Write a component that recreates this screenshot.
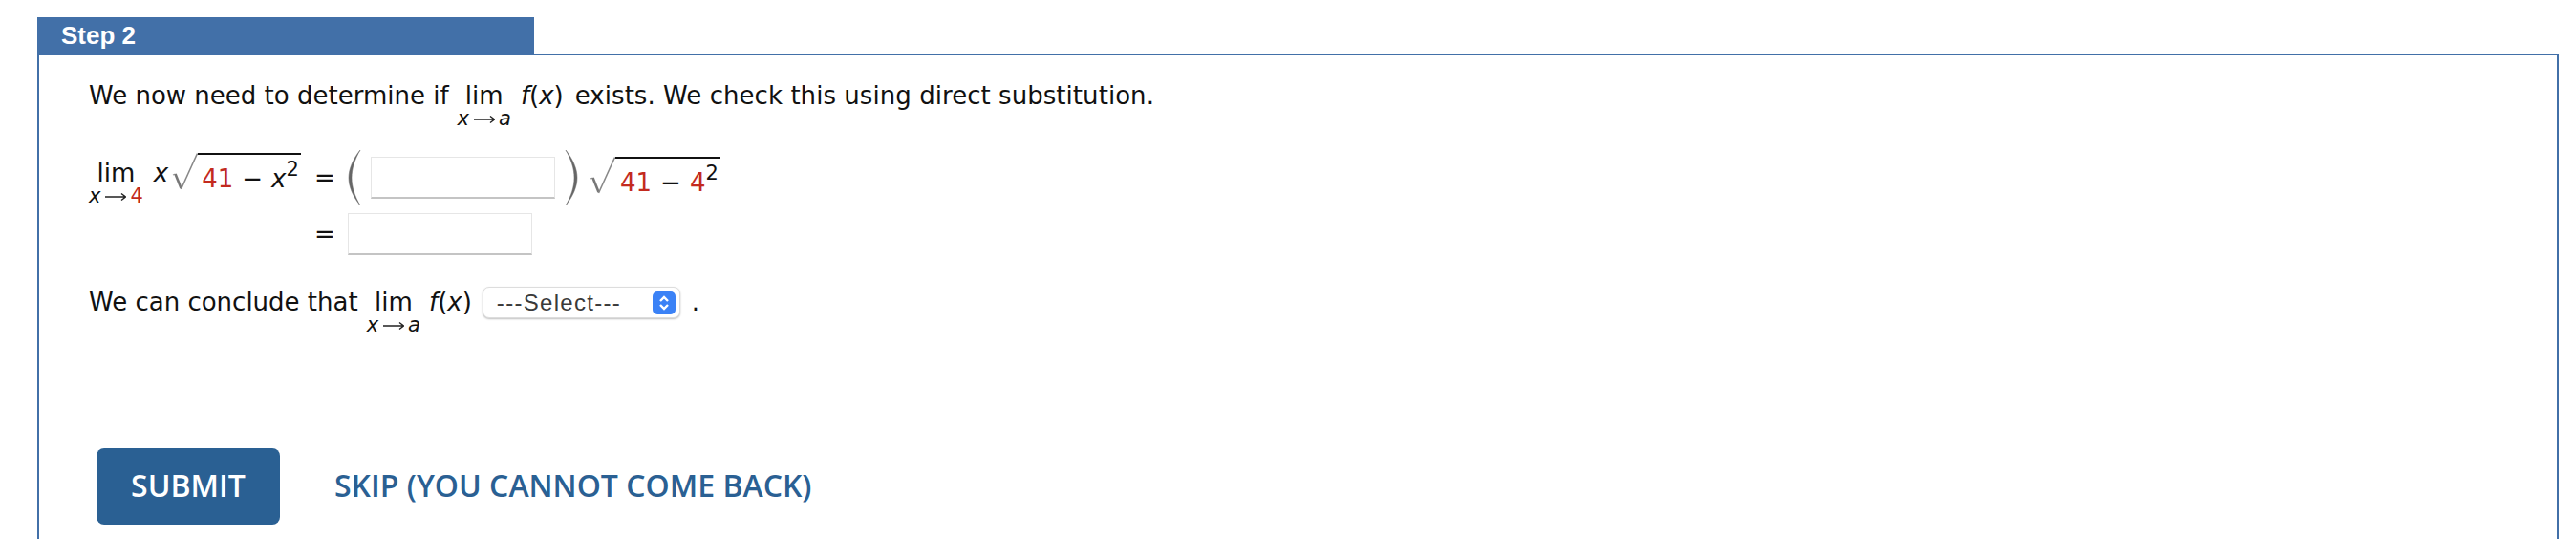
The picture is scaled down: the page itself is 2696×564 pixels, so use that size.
<div class="page">
  <div class="tab">Step 2</div>
  <div class="box">
    <div class="line">
      <span>We now need to determine if</span>
      <span class="lim"><span class="word">lim</span><span class="under"><i>x</i><svg class="arrow" viewBox="0 0 22 10" width="22" height="10" aria-hidden="true"><path d="M0 5 H21 M17 1.500 L21.500 5 L17 8.500" fill="none" stroke="#222" stroke-width="1.400"/></svg><i>a</i></span></span>
      <span class="fx"><i>f</i>(<i>x</i>)</span>
      <span class="after">exists. We check this using direct substitution.</span>
    </div>

    <div class="eq">
      <div class="lhs">
        <span class="lim"><span class="word">lim</span><span class="under"><i>x</i><svg class="arrow" viewBox="0 0 22 10" width="22" height="10" aria-hidden="true"><path d="M0 5 H21 M17 1.500 L21.500 5 L17 8.500" fill="none" stroke="#222" stroke-width="1.400"/></svg><span class="red">4</span></span></span>
        <i class="x">x</i>
        <span class="sqrt">
          <svg class="rad" viewBox="0 0 27 40" width="27" height="40" aria-hidden="true"><path d="M1 23 L3.500 22" fill="none" stroke="#999" stroke-width="1.200"/><path d="M3.500 22 L9.500 37" fill="none" stroke="#777" stroke-width="2.600"/><path d="M9.500 38 L26.500 0.500" fill="none" stroke="#888" stroke-width="1.600"/></svg>
          <span class="bar"><span class="red">41</span><span class="minus">−</span><i>x</i><sup>2</sup></span>
        </span>
      </div>
      <div class="eqs">=</div>
      <div class="rhs">
        <svg class="paren" viewBox="0 0 14 58" width="14" height="58" aria-hidden="true"><path d="M13 0 C5 10 1 20 1 29 C1 38 5 48 13 58 C7 48 4 38 4 29 C4 20 7 10 13 0 Z" fill="#666" stroke="#666" stroke-width=".5"/></svg>
        <input class="field" type="text" aria-label="factor" />
        <svg class="paren" viewBox="0 0 14 58" width="14" height="58" aria-hidden="true"><path d="M1 0 C9 10 13 20 13 29 C13 38 9 48 1 58 C7 48 10 38 10 29 C10 20 7 10 1 0 Z" fill="#666" stroke="#666" stroke-width=".5"/></svg>
        <span class="sqrt end">
          <svg class="rad" viewBox="0 0 27 40" width="27" height="40" aria-hidden="true"><path d="M1 23 L3.500 22" fill="none" stroke="#999" stroke-width="1.200"/><path d="M3.500 22 L9.500 37" fill="none" stroke="#777" stroke-width="2.600"/><path d="M9.500 38 L26.500 0.500" fill="none" stroke="#888" stroke-width="1.600"/></svg>
          <span class="bar"><span class="red">41</span><span class="minus">−</span><span class="red">4</span><sup>2</sup></span>
        </span>
      </div>
      <div></div>
      <div class="eqs">=</div>
      <div><input class="field" type="text" aria-label="value" /></div>
    </div>

    <div class="line third">
      <span>We can conclude that</span>
      <span class="lim"><span class="word">lim</span><span class="under"><i>x</i><svg class="arrow" viewBox="0 0 22 10" width="22" height="10" aria-hidden="true"><path d="M0 5 H21 M17 1.500 L21.500 5 L17 8.500" fill="none" stroke="#222" stroke-width="1.400"/></svg><i>a</i></span></span>
      <span class="fx-plain"><i>f</i>(<i>x</i>)</span>
      <span class="select"><span>---Select---</span><span class="chip"><svg viewBox="0 0 24 24" width="24" height="24" aria-hidden="true"><path d="M8 10 L12 6 L16 10 M8 14 L12 18 L16 14" fill="none" stroke="#fff" stroke-width="2.4"/></svg></span></span>
      <span class="dot">.</span>
    </div>

    <div class="actions">
      <button class="submit">SUBMIT</button>
      <span class="skip">SKIP (YOU CANNOT COME BACK)</span>
    </div>
  </div>
</div>

<style>
  :global(body) { margin: 0; background: #fff; }
  .page { height: 564px; overflow: hidden; padding: 18px 18px 0 39px; box-sizing: border-box; font-family: "DejaVu Sans", Verdana, sans-serif; color: #111; font-size: 26px; line-height: 30px; }
  .tab { width: 520px; height: 38px; box-sizing: border-box; background: #4270a8; color: #fff; font: bold 26px/38px "Liberation Sans", Arial, sans-serif; padding-left: 25px; }
  .box { border: 2px solid #4270a8; border-bottom: none; height: 600px; box-sizing: border-box; padding: 27px 0 0 52px; }
  .line { display: flex; align-items: baseline; gap: 9px; }
  .lim { display: inline-flex; flex-direction: column; align-items: center; }
  .under { font-size: 21px; line-height: 26px; white-space: nowrap; margin-top: -4px; display: flex; align-items: center; }
  .arrow { margin: 2px 4px 0 5px; display: block; }
  .fx { margin-left: 1px; }
  .after { margin-left: 3px; letter-spacing: .05px; }
  .eq { display: grid; grid-template-columns: 236px 35px auto; justify-content: start; margin-top: 20px; row-gap: 8px; align-items: center; }
  .lhs { display: flex; align-items: flex-start; align-self: start; margin: 9px 0 -20px; }
  .rhs { display: flex; align-items: center; }
  .x { margin-left: 11px; }
  .lhs .sqrt { margin: -6px 0 0 4px; }
  .lhs .bar { padding-left: 4px; }
  .sqrt { display: inline-flex; align-items: flex-start; }
  .sqrt.end { align-self: flex-start; margin: 7px 0 0 12px; }
  .rad { display: block; }
  .bar { border-top: 2px solid #111; padding: 10px 2px 0 5px; line-height: 30px; white-space: nowrap; }
  .minus { margin: 0 9px; }
  sup { font-size: 21px; line-height: 0; vertical-align: 12px; }
  .red { color: #c32a1e; }
  .field { width: 193px; height: 44px; box-sizing: border-box; background: #fff; border: 1px solid #e6e6e6; border-bottom: 2px solid #c4c4c4; padding: 0; margin: 0; display: block; }
  .rhs .field { margin: 0 10px; }
  .third { margin-top: 33px; }
  .select { display: inline-flex; align-items: center; justify-content: space-between; width: 207px; height: 33px; box-sizing: border-box; border: 1px solid #ddd; border-radius: 7px; box-shadow: 0 1px 2px rgba(0,0,0,.25); padding: 0 4px 0 14px; font: 24px/33px "Liberation Sans", Arial, sans-serif; letter-spacing: 1.3px; color: #3a3a3a; background: #fff; margin-left: 2px; }
  .chip { width: 24px; height: 24px; border-radius: 5px; background: #3b82f6; display: flex; }
  .dot { margin-left: 3px; }
  .actions { display: flex; align-items: center; gap: 57px; margin-top: 116px; margin-left: 8px; }
  .submit { width: 192px; height: 80px; border: none; border-radius: 8px; background: #2a6093; color: #fff; font: 600 32px/44px "Open Sans", sans-serif; padding: 0 0 3px; }
  .skip { color: #2a6093; font: 600 32px/44px "Open Sans", sans-serif; padding-bottom: 3px; }
</style>
